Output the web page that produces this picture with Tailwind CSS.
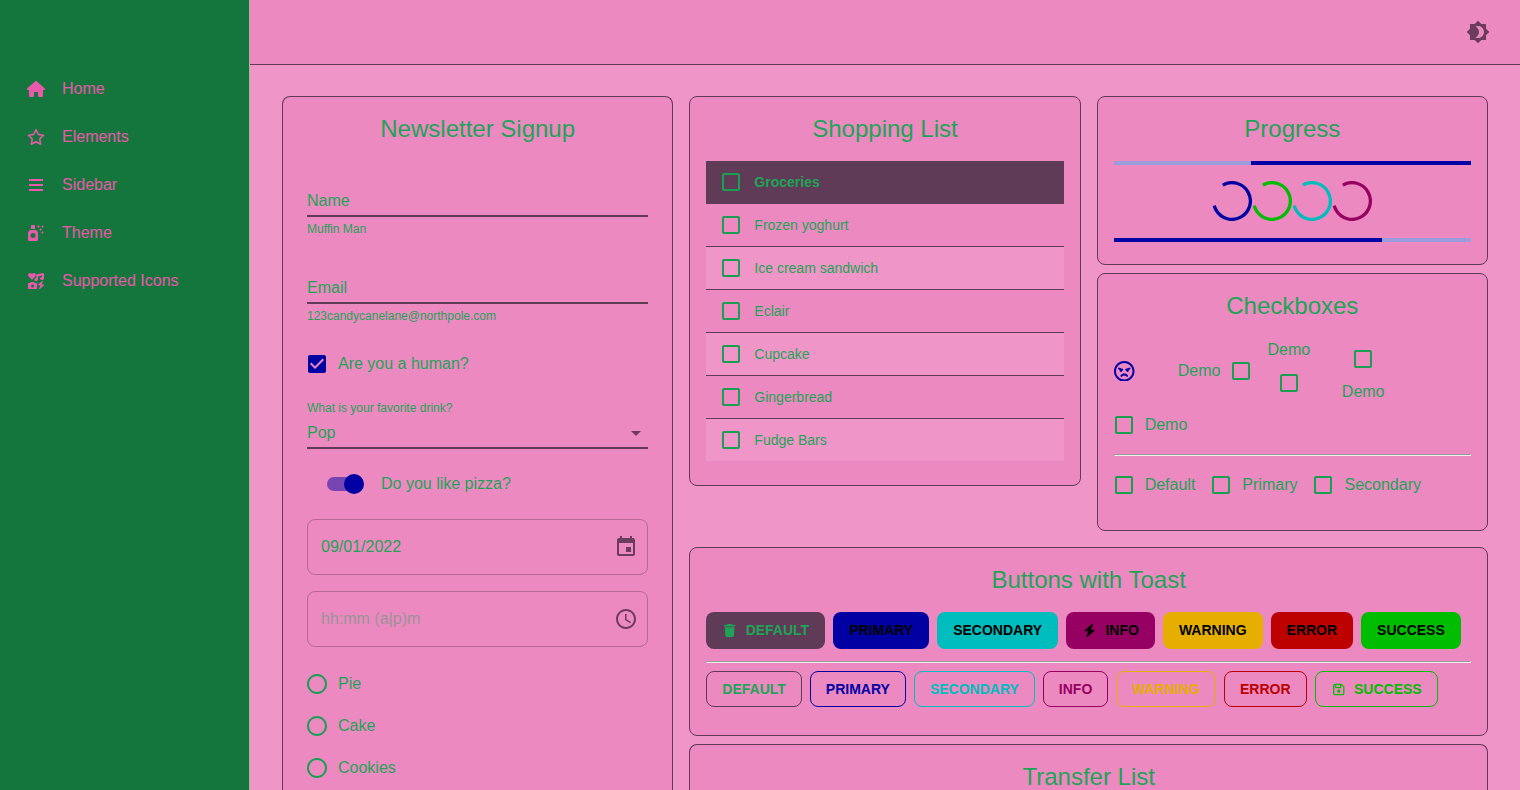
<!DOCTYPE html>
<html lang="en">
<head>
<meta charset="utf-8">
<title>Theme Demo</title>
<script src="https://cdn.jsdelivr.net/npm/@tailwindcss/browser@4"></script>
</head>
<body class="flex h-[790px] w-[1520px] overflow-hidden bg-[#ef95c8] font-['Liberation_Sans',Arial,sans-serif] text-base leading-6 text-[#1ea456]">
<svg class="hidden">
  <symbol id="box" viewBox="0 0 24 24"><path class="fill-[#199f50]" d="M19 5v14H5V5h14m0-2H5c-1.1 0-2 .9-2 2v14c0 1.1.9 2 2 2h14c1.1 0 2-.9 2-2V5c0-1.1-.9-2-2-2z"/></symbol>
  <symbol id="radio" viewBox="0 0 24 24"><path class="fill-[#199f50]" d="M12 2C6.48 2 2 6.48 2 12s4.48 10 10 10 10-4.48 10-10S17.52 2 12 2zm0 18c-4.42 0-8-3.58-8-8s3.58-8 8-8 8 3.58 8 8-3.58 8-8 8z"/></symbol>
  <symbol id="ring" viewBox="22 22 44 44"><circle cx="44" cy="44" r="20.2" fill="none" stroke="currentColor" stroke-width="3.6" stroke-dasharray="100 200" transform="rotate(-120 44 44)"/></symbol>
  <symbol id="spark" viewBox="0 0 96 96"><path d="M96 48c0-1.4-1-3-2.2-3.6L64 32 51.6 2.2C51 1 49.4 0 48 0s-3 1-3.6 2.2L32 32 2.200 44.400C1 45 0 46.600 0 48s1 3 2.200 3.600L32 64l12.400 29.800C45 95 46.600 96 48 96s3-1 3.600-2.200L64 64l29.800-12.400C95 51 96 49.400 96 48z"/></symbol>
</svg>

<aside class="w-[250px] shrink-0 border-r border-[#a5b9a0] bg-[#15763d] pt-[65px] text-[#e858ab]">
  <nav>
    <a class="flex h-12 items-center"><span class="ml-6 flex w-6 justify-center"><svg class="h-4 w-[18px] fill-current" viewBox="0 0 576 512"><path d="M575.8 255.5c0 18-15 32.1-32 32.1h-32l.7 160.2c0 2.700-.2 5.400-.5 8.100V472c0 22.100-17.900 40-40 40H456c-1.100 0-2.200 0-3.300-.1c-1.400 .1-2.800 .1-4.200 .1H416 392c-22.100 0-40-17.900-40-40V448 384c0-17.700-14.300-32-32-32H256c-17.700 0-32 14.300-32 32v64 24c0 22.100-17.900 40-40 40H160 128.100c-1.500 0-3-.1-4.500-.2c-1.200 .1-2.400 .2-3.600 .2H104c-22.100 0-40-17.900-40-40V360c0-.9 0-1.900 .1-2.800V287.600H32c-18 0-32-14-32-32.100c0-9 3-17 10-24L266.400 8c7-7 15-8 22-8s15 2 21 7L564.800 231.500c8 7 12 15 11 24z"/></svg></span><span class="ml-3.5">Home</span></a>
    <a class="flex h-12 items-center"><span class="ml-6 flex w-6 justify-center"><svg class="h-4 w-[18px] fill-current" viewBox="0 0 576 512"><path d="M287.900 0c9.200 0 17.600 5.200 21.600 13.500l68.600 141.300 153.200 22.600c9 1.300 16.500 7.600 19.300 16.300s.5 18.100-5.900 24.500L433.600 328.400l26.200 155.600c1.500 9-2.200 18.100-9.700 23.500s-17.300 6-25.300 1.700l-137-73.200L151 509.100c-8.100 4.300-17.900 3.700-25.300-1.700s-11.200-14.500-9.700-23.500l26.200-155.600L31.100 218.200c-6.500-6.400-8.700-15.900-5.900-24.500s10.300-14.900 19.300-16.300l153.200-22.600L266.300 13.500C270.400 5.200 278.700 0 287.900 0zm0 79L235.400 187.200c-3.500 7.100-10.200 12.100-18.100 13.300L99 217.900 184.900 303c5.500 5.500 8.100 13.300 6.800 21L171.400 443.700l105.200-56.200c7.100-3.800 15.600-3.800 22.600 0l105.200 56.200L384.200 324.100c-1.300-7.700 1.200-15.500 6.800-21l85.900-85.100L358.600 200.500c-7.800-1.200-14.600-6.100-18.100-13.300L287.900 79z"/></svg></span><span class="ml-3.5">Elements</span></a>
    <a class="flex h-12 items-center"><span class="ml-6 flex w-6 justify-center"><svg class="h-4 w-3.5 fill-current" viewBox="0 0 14 16"><path d="M0 2h14v2H0zM0 7h14v2H0zM0 12h14v2H0z"/></svg></span><span class="ml-3.5">Sidebar</span></a>
    <a class="flex h-12 items-center"><span class="ml-6 flex w-6 justify-center"><svg class="size-4 fill-current" viewBox="0 0 512 512"><path d="M96 32v96h128V32c0-17.700-14.300-32-32-32h-64C110.300 0 96 14.300 96 32zm0 128c-53 0-96 43-96 96v208c0 26.500 21.500 48 48 48h224c26.500 0 48-21.500 48-48V256c0-53-43-96-96-96H96zm64 96a80 80 0 1 1 0 160 80 80 0 1 1 0-160z" fill-rule="evenodd"/><use href="#spark" x="288" y="0" width="96" height="96"/><use href="#spark" x="416" y="0" width="96" height="96"/><use href="#spark" x="352" y="96" width="96" height="96"/><use href="#spark" x="416" y="192" width="96" height="96"/></svg></span><span class="ml-3.5">Theme</span></a>
    <a class="flex h-12 items-center"><span class="ml-6 flex w-6 justify-center"><svg class="size-4 fill-current" viewBox="0 0 16 16"><path d="M3.600 6.400.7 3.600C-.2 2.700-.2 1.200.7.500c.9-.8 2.100-.6 2.900.2l.3.400.4-.4c.8-.8 2-1 2.900-.2.900.7.900 2.200 0 3.100L4.300 6.400a.5.500 0 0 1-.7 0zM14.600 0c.8-.2 1.400.3 1.400 1v4.500C16 6.300 15.100 7 14 7s-2-.7-2-1.500S12.900 4 14 4V2.400l-4 1.200v2.900C10 7.300 9.100 8 8.300 8 7.200 8 6.300 7.300 6.500 6.500 6.700 5.700 7.300 5.200 8.300 5V2.200c0-.5.300-.9.800-1zM2.700 9h3.600l.5 1H8c.6 0 1 .4 1 1v4c0 .6-.4 1-1 1H1c-.6 0-1-.4-1-1v-4c0-.6.4-1 1-1h1.200zm1.800 2.500a1.500 1.500 0 1 0 0 3 1.500 1.500 0 0 0 0-3z" fill-rule="evenodd"/><path d="M14.200 8 10.300 11.300c-.4.4-.2.900.3.900h1.900L11.200 15.300c-.2.500.3.900.7.600l3.900-3.400c.4-.4.2-1-.4-1h-1.800l1.300-2.900c.2-.5-.3-.9-.7-.6z"/></svg></span><span class="ml-3.5">Supported Icons</span></a>
  </nav>
</aside>

<div class="flex h-full min-w-0 flex-1 flex-col overflow-hidden">
  <header class="flex h-[65px] shrink-0 items-center justify-end border-b border-[#5f3b57] bg-[#ec89c1] pr-[30px]">
    <svg class="size-6 fill-[#6b3c5d]" viewBox="0 0 24 24"><path d="M20 8.690V4h-4.690L12 .69 8.690 4H4v4.690L.69 12 4 15.310V20h4.690L12 23.310 15.310 20H20v-4.690L23.310 12 20 8.690zM12 18c-.89 0-1.740-.2-2.500-.55C11.560 16.500 13 14.420 13 12s-1.440-4.500-3.500-5.450C10.260 6.200 11.110 6 12 6c3.310 0 6 2.690 6 6s-2.690 6-6 6z"/></svg>
  </header>

  <main class="grid min-h-0 flex-1 grid-cols-3 items-start gap-4 overflow-hidden px-8 pt-[31px]">
    <section class="h-[694px] rounded-t-lg border border-b-0 border-[#5f3b57] bg-[#ec89c1] px-6 pt-4">
      <h2 class="text-center text-2xl leading-8">Newsletter Signup</h2>
      <div class="mt-11 border-b-2 border-[#5f3b57] pb-[2px]">Name</div>
      <div class="mt-0.5 text-xs leading-5">Muffin Man</div>
      <div class="mt-[37px] border-b-2 border-[#5f3b57] pb-[2px]">Email</div>
      <div class="mt-0.5 text-xs leading-5">123candycanelane@northpole.com</div>
      <label class="mt-[17px] flex h-[42px] items-center"><svg class="-ml-0.5 size-6 fill-[#0000a3]" viewBox="0 0 24 24"><path d="M19 3H5c-1.110 0-2 .9-2 2v14c0 1.100.89 2 2 2h14c1.110 0 2-.9 2-2V5c0-1.100-.89-2-2-2zm-9 14l-5-5 1.410-1.410L10 14.170l7.590-7.590L19 8l-9 9z"/></svg><span class="ml-[9px]">Are you a human?</span></label>
      <div class="mt-[13px] text-xs leading-5">What is your favorite drink?</div>
      <div class="mt-[3px] flex justify-between border-b-2 border-[#5f3b57] pb-[2px]"><span>Pop</span><svg class="size-6 fill-[#6b3c5d]" viewBox="0 0 24 24"><path d="M7 10l5 5 5-5z"/></svg></div>
      <label class="mt-[23px] flex h-6 items-center"><span class="ml-5 flex h-3.5 w-[34px] items-center rounded-full bg-[#7645b2]"><span class="ml-[17px] size-5 shrink-0 rounded-full bg-[#0000a3]"></span></span><span class="ml-5">Do you like pizza?</span></label>
      <div class="mt-[23px] flex h-14 items-center justify-between rounded-lg border border-black/23 pr-[9px] pl-[13px]"><span>09/01/2022</span><svg class="size-6 fill-[#6b3c5d]" viewBox="0 0 24 24"><path d="M17 12h-5v5h5v-5zM16 1v2H8V1H6v2H5c-1.110 0-1.990.9-1.990 2L3 19c0 1.100.89 2 2 2h14c1.100 0 2-.9 2-2V5c0-1.100-.9-2-2-2h-1V1h-2zm3 18H5V8h14v11z"/></svg></div>
      <div class="mt-4 flex h-14 items-center justify-between rounded-lg border border-black/23 pr-[9px] pl-[13px]"><span class="opacity-42">hh:mm (a|p)m</span><svg class="size-6 fill-[#6b3c5d]" viewBox="0 0 24 24"><path d="M11.990 2C6.470 2 2 6.480 2 12s4.470 10 9.990 10C17.520 22 22 17.520 22 12S17.520 2 11.990 2zM12 20c-4.420 0-8-3.580-8-8s3.580-8 8-8 8 3.580 8 8-3.580 8-8 8z"/><path d="M12.500 7H11v6l5.250 3.150.75-1.230-4.500-2.670z"/></svg></div>
      <div class="mt-4">
        <label class="flex h-[42px] items-center"><svg class="-ml-0.5 size-6 fill-current"><use href="#radio"/></svg><span class="ml-[9px]">Pie</span></label>
        <label class="flex h-[42px] items-center"><svg class="-ml-0.5 size-6 fill-current"><use href="#radio"/></svg><span class="ml-[9px]">Cake</span></label>
        <label class="flex h-[42px] items-center"><svg class="-ml-0.5 size-6 fill-current"><use href="#radio"/></svg><span class="ml-[9px]">Cookies</span></label>
      </div>
    </section>

    <div class="col-span-2">
      <div class="grid grid-cols-2 items-start gap-4">
        <section class="h-[390px] rounded-lg border border-[#5f3b57] bg-[#ec89c1] px-4 pt-4">
          <h2 class="text-center text-2xl leading-8">Shopping List</h2>
          <div class="mt-4 text-sm leading-5">
            <div class="flex h-[43px] items-center border-b border-[#5f3b57] bg-[#5f3b57] pl-[13px] font-bold"><svg class="size-6 fill-current"><use href="#box"/></svg><span class="ml-[11px]">Groceries</span></div>
            <div class="flex h-[43px] items-center border-b border-[#5f3b57] pl-[13px]"><svg class="size-6 fill-current"><use href="#box"/></svg><span class="ml-[11px]">Frozen yoghurt</span></div>
            <div class="flex h-[43px] items-center border-b border-[#5f3b57] bg-[#ef95c8] pl-[13px]"><svg class="size-6 fill-current"><use href="#box"/></svg><span class="ml-[11px]">Ice cream sandwich</span></div>
            <div class="flex h-[43px] items-center border-b border-[#5f3b57] pl-[13px]"><svg class="size-6 fill-current"><use href="#box"/></svg><span class="ml-[11px]">Eclair</span></div>
            <div class="flex h-[43px] items-center border-b border-[#5f3b57] bg-[#ef95c8] pl-[13px]"><svg class="size-6 fill-current"><use href="#box"/></svg><span class="ml-[11px]">Cupcake</span></div>
            <div class="flex h-[43px] items-center border-b border-[#5f3b57] pl-[13px]"><svg class="size-6 fill-current"><use href="#box"/></svg><span class="ml-[11px]">Gingerbread</span></div>
            <div class="flex h-[42px] items-center bg-[#ef95c8] pl-[13px]"><svg class="size-6 fill-current"><use href="#box"/></svg><span class="ml-[11px]">Fudge Bars</span></div>
          </div>
        </section>

        <div class="flex flex-col gap-2">
          <section class="h-[169px] rounded-lg border border-[#5f3b57] bg-[#ec89c1] px-4 pt-4">
            <h2 class="text-center text-2xl leading-8">Progress</h2>
            <div class="mt-4 flex h-1 bg-[#9b9cdb]"><div class="ml-auto h-1 bg-[#0000a3]" style="width:61.6%"></div></div>
            <div class="mt-4 flex justify-center">
              <svg class="size-10 text-[#0000a3]"><use href="#ring"/></svg>
              <svg class="size-10 text-[#00bd00]"><use href="#ring"/></svg>
              <svg class="size-10 text-[#00bdbd]"><use href="#ring"/></svg>
              <svg class="size-10 text-[#960062]"><use href="#ring"/></svg>
            </div>
            <div class="mt-[17px] h-1 bg-[#9b9cdb]"><div class="h-1 bg-[#0000a3]" style="width:75%"></div></div>
          </section>

          <section class="h-[258px] rounded-lg border border-[#5f3b57] bg-[#ec89c1] px-4 pt-4">
            <h2 class="text-center text-2xl leading-8">Checkboxes</h2>
            <div class="mt-4 flex h-[66px] items-center gap-8">
              <span class="flex w-[32.1px] pl-[0.4px]"><svg class="size-[20.5px] fill-[#0000a3]" viewBox="0 8 496 496"><path d="M248 8C111 8 0 119 0 256s111 248 248 248 248-111 248-248S385 8 248 8zm0 448c-110.300 0-200-89.700-200-200S137.700 56 248 56s200 89.700 200 200-89.700 200-200 200zm0-144c-33.600 0-65.200 14.800-86.800 40.600-8.500 10.200-7.100 25.300 3.100 33.800s25.300 7.200 33.800-3c24.800-29.700 75-29.700 99.800 0 8.100 9.700 23.200 11.900 33.800 3 10.200-8.500 11.500-23.600 3.100-33.800-21.600-25.800-53.200-40.600-86.800-40.600zm-48-72c10.300 0 19.900-6.700 23-17.100 3.800-12.700-3.400-26.100-16.100-29.900l-80-24c-12.800-3.900-26.100 3.400-29.900 16.100-3.800 12.700 3.400 26.100 16.100 29.900l28.200 8.500c-3.100 4.900-5.300 10.400-5.300 16.600 0 17.700 14.300 32 32 32s32-14.400 32-32.100zm199-54.900c-3.800-12.700-17.100-19.900-29.900-16.100l-80 24c-12.700 3.800-19.900 17.200-16.100 29.900 3.100 10.400 12.700 17.100 23 17.100 0 17.700 14.300 32 32 32s32-14.300 32-32c0-6.200-2.200-11.700-5.300-16.600l28.200-8.500c12.700-3.700 19.900-17.100 16.100-29.800z"/></svg></span>
              <label class="-mr-4 flex items-center">Demo<svg class="mr-[9px] ml-[9px] size-6 fill-current"><use href="#box"/></svg></label>
              <label class="-ml-[11px] flex flex-col items-center">Demo<svg class="my-[9px] size-6 fill-current"><use href="#box"/></svg></label>
              <label class="-ml-[0.3px] flex flex-col items-center"><svg class="my-[9px] size-6 fill-current"><use href="#box"/></svg>Demo</label>
            </div>
            <label class="flex h-[42px] items-center"><svg class="-ml-0.5 size-6 fill-current"><use href="#box"/></svg><span class="ml-[9px]">Demo</span></label>
            <div class="my-2 h-0.5 border border-[#9a9a9a] border-r-[#eeeeee] border-b-[#eeeeee]"></div>
            <div class="flex h-[42px] items-center gap-4">
              <label class="flex items-center"><svg class="-ml-0.5 size-6 fill-current"><use href="#box"/></svg><span class="ml-[9px]">Default</span></label>
              <label class="flex items-center"><svg class="-ml-0.5 size-6 fill-current"><use href="#box"/></svg><span class="ml-[9px]">Primary</span></label>
              <label class="flex items-center"><svg class="-ml-0.5 size-6 fill-current"><use href="#box"/></svg><span class="ml-[9px]">Secondary</span></label>
            </div>
          </section>
        </div>
      </div>

      <section class="mt-4 h-[189px] rounded-lg border border-[#5f3b57] bg-[#ec89c1] px-4 pt-4">
        <h2 class="text-center text-2xl leading-8">Buttons with Toast</h2>
        <div class="mt-4 flex gap-2 text-sm leading-5 font-bold text-black">
          <button class="flex h-[37px] items-center rounded-lg bg-[#5f3b57] px-4 pb-px text-[#1ea456]"><svg class="mr-2 h-[13px] w-[15.3px] fill-current" viewBox="0 0 448 512"><path d="M135.200 17.700L128 32H32C14.300 32 0 46.300 0 64S14.300 96 32 96H416c17.700 0 32-14.300 32-32s-14.300-32-32-32H320l-7.200-14.300C307.400 6.800 296.300 0 284.200 0H163.800c-12.100 0-23.200 6.800-28.600 17.700zM416 128H32L53.200 467c1.600 25.300 22.600 45 47.900 45H346.900c25.300 0 46.300-19.700 47.900-45L416 128z"/></svg>DEFAULT</button>
          <button class="h-[37px] rounded-lg bg-[#0000a3] px-4 pb-px">PRIMARY</button>
          <button class="h-[37px] rounded-lg bg-[#00bdbd] px-4 pb-px">SECONDARY</button>
          <button class="flex h-[37px] items-center rounded-lg bg-[#960062] px-4 pb-px"><svg class="mr-2 h-[13px] w-[15.3px] fill-current" viewBox="0 0 448 512"><path d="M349.400 44.600c5.900-13.700 1.500-29.700-10.600-38.500s-28.600-8-39.900 1.800l-256 224c-10 8.800-13.600 22.900-8.900 35.300S50.700 288 64 288H175.500L98.600 467.400c-5.900 13.700-1.500 29.700 10.600 38.500s28.600 8 39.900-1.800l256-224c10-8.800 13.600-22.900 8.900-35.300s-16.600-20.700-30-20.700H272.500L349.400 44.600z"/></svg>INFO</button>
          <button class="h-[37px] rounded-lg bg-[#e6af00] px-4 pb-px">WARNING</button>
          <button class="h-[37px] rounded-lg bg-[#bd0000] px-4 pb-px">ERROR</button>
          <button class="h-[37px] rounded-lg bg-[#00bd00] px-4 pb-px">SUCCESS</button>
        </div>
        <div class="mt-3 mb-2 h-0.5 border border-[#9a9a9a] border-r-[#eeeeee] border-b-[#eeeeee]"></div>
        <div class="flex gap-2 text-sm leading-5 font-bold">
          <button class="h-9 rounded-lg border border-[#5f3b57] px-[15px]">DEFAULT</button>
          <button class="h-9 rounded-lg border border-[#0000a3] px-[15px] text-[#0000a3]">PRIMARY</button>
          <button class="h-9 rounded-lg border border-[#00bdbd] px-[15px] text-[#00bdbd]">SECONDARY</button>
          <button class="h-9 rounded-lg border border-[#960062] px-[15px] text-[#960062]">INFO</button>
          <button class="h-9 rounded-lg border border-[#e6af00] px-[15px] text-[#e6af00]">WARNING</button>
          <button class="h-9 rounded-lg border border-[#bd0000] px-[15px] text-[#bd0000]">ERROR</button>
          <button class="flex h-9 items-center rounded-lg border border-[#00bd00] px-[15px] text-[#00bd00]"><svg class="mr-2 h-[13px] w-[15.5px] fill-current" viewBox="0 0 448 512"><path d="M48 96V416c0 8.800 7.200 16 16 16H384c8.800 0 16-7.200 16-16V170.500c0-4.200-1.700-8.300-4.700-11.300l33.900-33.900c12 12 18.700 28.300 18.700 45.300V416c0 35.300-28.700 64-64 64H64c-35.300 0-64-28.700-64-64V96C0 60.700 28.700 32 64 32H309.500c17 0 33.300 6.700 45.300 18.700l74.500 74.500-33.900 33.900L320.800 84.700c-.3-.3-.5-.5-.8-.8V184c0 13.300-10.700 24-24 24H104c-13.300 0-24-10.700-24-24V80H64c-8.800 0-16 7.200-16 16zm80-16v80H272V80H128zm32 240a64 64 0 1 1 128 0 64 64 0 1 1-128 0z"/></svg>SUCCESS</button>
        </div>
      </section>

      <section class="mt-2 h-[46px] overflow-hidden rounded-t-lg border border-b-0 border-[#5f3b57] bg-[#ec89c1] px-4 pt-4">
        <h2 class="text-center text-2xl leading-8 whitespace-nowrap">Transfer List</h2>
      </section>
    </div>
  </main>
</div>
</body>
</html>
